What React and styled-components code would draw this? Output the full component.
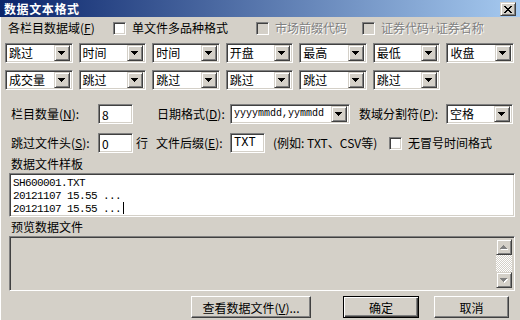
import React from 'react';
import styled, { createGlobalStyle, css } from 'styled-components';

const GlobalStyle = createGlobalStyle`
  html, body { margin: 0; padding: 0; background: #D4D0C8; }
  body {
    font-family: "Noto Sans CJK SC", "Liberation Sans", sans-serif;
    font-size: 12px;
    color: #000;
  }
  * { box-sizing: border-box; }
`;

const sunken = css`
  border-style: solid;
  border-width: 1px;
  border-color: #808080 #fff #fff #808080;
  box-shadow: inset 1px 1px 0 #404040, inset -1px -1px 0 #D4D0C8;
`;

const raised = css`
  border-style: solid;
  border-width: 1px;
  border-color: #D4D0C8 #404040 #404040 #D4D0C8;
  box-shadow: inset 1px 1px 0 #fff, inset -1px -1px 0 #808080;
  background: #D4D0C8;
`;

const Window = styled.div`
  width: 520px;
  height: 320px;
  background: #D4D0C8;
  display: flex;
  flex-direction: column;
  overflow: hidden;
`;

const TitleBar = styled.div`
  height: 17px;
  flex: none;
  background: linear-gradient(to right, #0A246A, #A6CAF0);
  display: flex;
  align-items: center;
  justify-content: space-between;
  padding: 0 4px 0 4px;
`;

const Title = styled.span`
  color: #fff;
  font-weight: bold;
  font-size: 12px;
  letter-spacing: 0.6px;
  line-height: 17px;
`;

const CloseBtn = styled.span`
  ${raised};
  width: 16px;
  height: 14px;
  display: flex;
  align-items: center;
  justify-content: center;
  margin-top: 1px;
`;

const Body = styled.div`
  flex: 1;
  display: flex;
  flex-direction: column;
  box-shadow: inset 1px 0 0 #fff;
`;

const TopRow = styled.div`
  display: grid;
  grid-template-columns: 105px 143px 106px auto;
  align-items: center;
  padding-left: 8px;
  margin-top: 3px;
  height: 16px;
`;

const Label = styled.span`
  font-size: 12px;
  line-height: 16px;
  white-space: nowrap;
  color: ${p => (p.$disabled ? '#808080' : '#000')};
  text-shadow: ${p => (p.$disabled ? '1px 1px 0 #fff' : 'none')};
  padding-left: ${p => p.$pl || 0}px;
`;

const CheckGroup = styled.span`
  display: flex;
  align-items: center;
  gap: 6px;
`;

const CheckBox = styled.span`
  ${sunken};
  width: 13px;
  height: 13px;
  flex: none;
  background: ${p => (p.$disabled ? '#D4D0C8' : '#fff')};
`;

const ComboGrid = styled.div`
  display: grid;
  grid-template-columns: repeat(7, 1fr);
  column-gap: 6px;
  padding: 0 6px 0 5px;
  margin-top: ${p => p.$mt}px;
`;

const ComboBox = styled.div`
  ${sunken};
  display: flex;
  align-items: center;
  height: 20px;
  width: ${p => (p.$w ? `${p.$w}px` : 'auto')};
  background: #fff;
  padding: 2px;
  flex: none;
`;

const ComboText = styled.span`
  flex: 1;
  padding-left: 1px;
  white-space: nowrap;
  overflow: hidden;
  line-height: 16px;
  font-family: ${p => (p.$mono ? '"Liberation Mono", monospace' : 'inherit')};
  font-size: ${p => (p.$mono ? '10px' : '12px')};
`;

const DropBtn = styled.span`
  ${raised};
  width: 16px;
  height: 16px;
  flex: none;
  display: flex;
  align-items: center;
  justify-content: center;
`;

const FieldRow = styled.div`
  display: grid;
  grid-template-columns: 87px 35px 23px 74px 1fr;
  align-items: center;
  padding-left: 11px;
  margin-top: ${p => p.$mt}px;
  height: 20px;
`;

const Inline = styled.div`
  display: flex;
  align-items: center;
`;

const TextInput = styled.div`
  ${sunken};
  height: 20px;
  width: ${p => p.$w}px;
  background: #fff;
  padding: 2px 3px;
  font-size: 12px;
  line-height: 15px;
  font-family: ${p => (p.$mono ? '"Liberation Mono", monospace' : 'inherit')};
`;

const Hint = styled.span`
  width: ${p => p.$w}px;
  margin-left: ${p => p.$ml}px;
  font-size: 12px;
  line-height: 16px;
  white-space: nowrap;
`;

const SectionLabel = styled.div`
  padding-left: 11px;
  font-size: 12px;
  line-height: 16px;
  margin-top: ${p => p.$mt}px;
`;

const SampleBox = styled.div`
  ${sunken};
  margin: 1px 5px 0 9px;
  height: 44px;
  background: #fff;
  padding: 3px 3px;
  font-family: "Liberation Mono", monospace;
  font-size: 11px;
  letter-spacing: -0.6px;
  line-height: 12.5px;
`;

const Caret = styled.span`
  display: inline-block;
  width: 1px;
  height: 12px;
  background: #000;
  vertical-align: -2px;
  margin-left: 2px;
`;

const PreviewBox = styled.div`
  ${sunken};
  margin: 1px 5px 0 9px;
  height: 55px;
  background: #D4D0C8;
  padding: 2px;
  display: flex;
  justify-content: flex-end;
`;

const ScrollBar = styled.div`
  width: 16px;
  display: flex;
  flex-direction: column;
`;

const ScrollBtn = styled.span`
  ${raised};
  width: 16px;
  height: 16px;
  flex: none;
  display: flex;
  align-items: center;
  justify-content: center;
`;

const ScrollTrack = styled.div`
  flex: 1;
  background-image: repeating-conic-gradient(#fff 0 25%, #D4D0C8 0 50%);
  background-size: 2px 2px;
`;

const ButtonRow = styled.div`
  display: flex;
  justify-content: flex-end;
  padding-right: 11px;
  margin-top: 5px;
`;

const Button = styled.button`
  height: 22px;
  width: ${p => p.$w}px;
  margin-left: ${p => p.$ml || 0}px;
  background: #D4D0C8;
  font-family: "Noto Sans CJK SC", "Liberation Sans", sans-serif;
  font-size: 12px;
  color: #000;
  padding: 0;
  border-style: solid;
  border-width: 1px;
  ${p =>
    p.$default
      ? css`
          border-color: #000;
          box-shadow: inset 1px 1px 0 #fff, inset -1px -1px 0 #404040, inset -2px -2px 0 #808080;
        `
      : css`
          border-color: #fff #404040 #404040 #fff;
          box-shadow: inset -1px -1px 0 #808080, inset 1px 1px 0 #D4D0C8;
        `}
`;

const CloseGlyph = () => (
  <svg width="8" height="7" viewBox="0 0 8 7" shapeRendering="crispEdges">
    <g fill="#000">
      <rect x="0" y="0" width="2" height="1" />
      <rect x="6" y="0" width="2" height="1" />
      <rect x="1" y="1" width="2" height="1" />
      <rect x="5" y="1" width="2" height="1" />
      <rect x="2" y="2" width="4" height="1" />
      <rect x="3" y="3" width="2" height="1" />
      <rect x="2" y="4" width="4" height="1" />
      <rect x="1" y="5" width="2" height="1" />
      <rect x="5" y="5" width="2" height="1" />
      <rect x="0" y="6" width="2" height="1" />
      <rect x="6" y="6" width="2" height="1" />
    </g>
  </svg>
);

const Tri = ({ up, color = '#000', shadow }) => {
  const rows = [7, 5, 3, 1];
  const order = up ? [...rows].reverse() : rows;
  return (
    <svg width="8" height="5" viewBox="0 0 8 5" shapeRendering="crispEdges">
      {shadow &&
        order.map((w, i) => (
          <rect key={`s${i}`} x={(7 - w) / 2 + 1} y={i + 1} width={w} height="1" fill="#fff" />
        ))}
      {order.map((w, i) => (
        <rect key={i} x={(7 - w) / 2} y={i} width={w} height="1" fill={color} />
      ))}
    </svg>
  );
};

const Combo = ({ value, w, mono }) => (
  <ComboBox $w={w}>
    <ComboText $mono={mono}>{value}</ComboText>
    <DropBtn>
      <Tri />
    </DropBtn>
  </ComboBox>
);

const Check = ({ label, disabled }) => (
  <CheckGroup>
    <CheckBox $disabled={disabled} />
    <Label $disabled={disabled}>{label}</Label>
  </CheckGroup>
);

const row1 = ['跳过', '时间', '时间', '开盘', '最高', '最低', '收盘'];
const row2 = ['成交量', '跳过', '跳过', '跳过', '跳过', '跳过'];

export default function App() {
  return (
    <>
      <GlobalStyle />
      <Window>
        <TitleBar>
          <Title>数据文本格式</Title>
          <CloseBtn>
            <CloseGlyph />
          </CloseBtn>
        </TitleBar>
        <Body>
          <TopRow>
            <Label>
              各栏目数据域(<u>F</u>)
            </Label>
            <Check label="单文件多品种格式" />
            <Check label="市场前缀代码" disabled />
            <Check label="证券代码+证券名称" disabled />
          </TopRow>

          <ComboGrid $mt={7}>
            {row1.map((v, i) => (
              <Combo key={i} value={v} />
            ))}
          </ComboGrid>
          <ComboGrid $mt={7}>
            {row2.map((v, i) => (
              <Combo key={i} value={v} />
            ))}
          </ComboGrid>

          <FieldRow $mt={14}>
            <Label>
              栏目数量(<u>N</u>):
            </Label>
            <TextInput $w={35}>8</TextInput>
            <span />
            <Label $pl={1}>
              日期格式(<u>D</u>):
            </Label>
            <Inline>
              <Combo value="yyyymmdd,yymmdd" w={120} mono />
              <Hint $w={87} $ml={9}>
                数域分割符(<u>P</u>):
              </Hint>
              <Combo value="空格" w={67} />
            </Inline>
          </FieldRow>

          <FieldRow $mt={9}>
            <Label>
              跳过文件头(<u>S</u>):
            </Label>
            <TextInput $w={35}>0</TextInput>
            <Label $pl={3}>行</Label>
            <Label>
              文件后缀(<u>E</u>):
            </Label>
            <Inline>
              <TextInput $w={35} $mono>
                TXT
              </TextInput>
              <Hint $w={116} $ml={8}>
                (例如: TXT、CSV等)
              </Hint>
              <Check label="无冒号时间格式" />
            </Inline>
          </FieldRow>

          <SectionLabel $mt={3}>数据文件样板</SectionLabel>
          <SampleBox>
            <div>SH600001.TXT</div>
            <div>20121107 15.55 ...</div>
            <div>
              20121107 15.55 ...
              <Caret />
            </div>
          </SampleBox>

          <SectionLabel $mt={2}>预览数据文件</SectionLabel>
          <PreviewBox>
            <ScrollBar>
              <ScrollBtn>
                <Tri up color="#808080" shadow />
              </ScrollBtn>
              <ScrollTrack />
              <ScrollBtn>
                <Tri color="#808080" shadow />
              </ScrollBtn>
            </ScrollBar>
          </PreviewBox>

          <ButtonRow>
            <Button $w={120}>
              查看数据文件(<u>V</u>)...
            </Button>
            <Button $w={76} $ml={32} $default>
              确定
            </Button>
            <Button $w={75} $ml={15}>
              取消
            </Button>
          </ButtonRow>
        </Body>
      </Window>
    </>
  );
}
